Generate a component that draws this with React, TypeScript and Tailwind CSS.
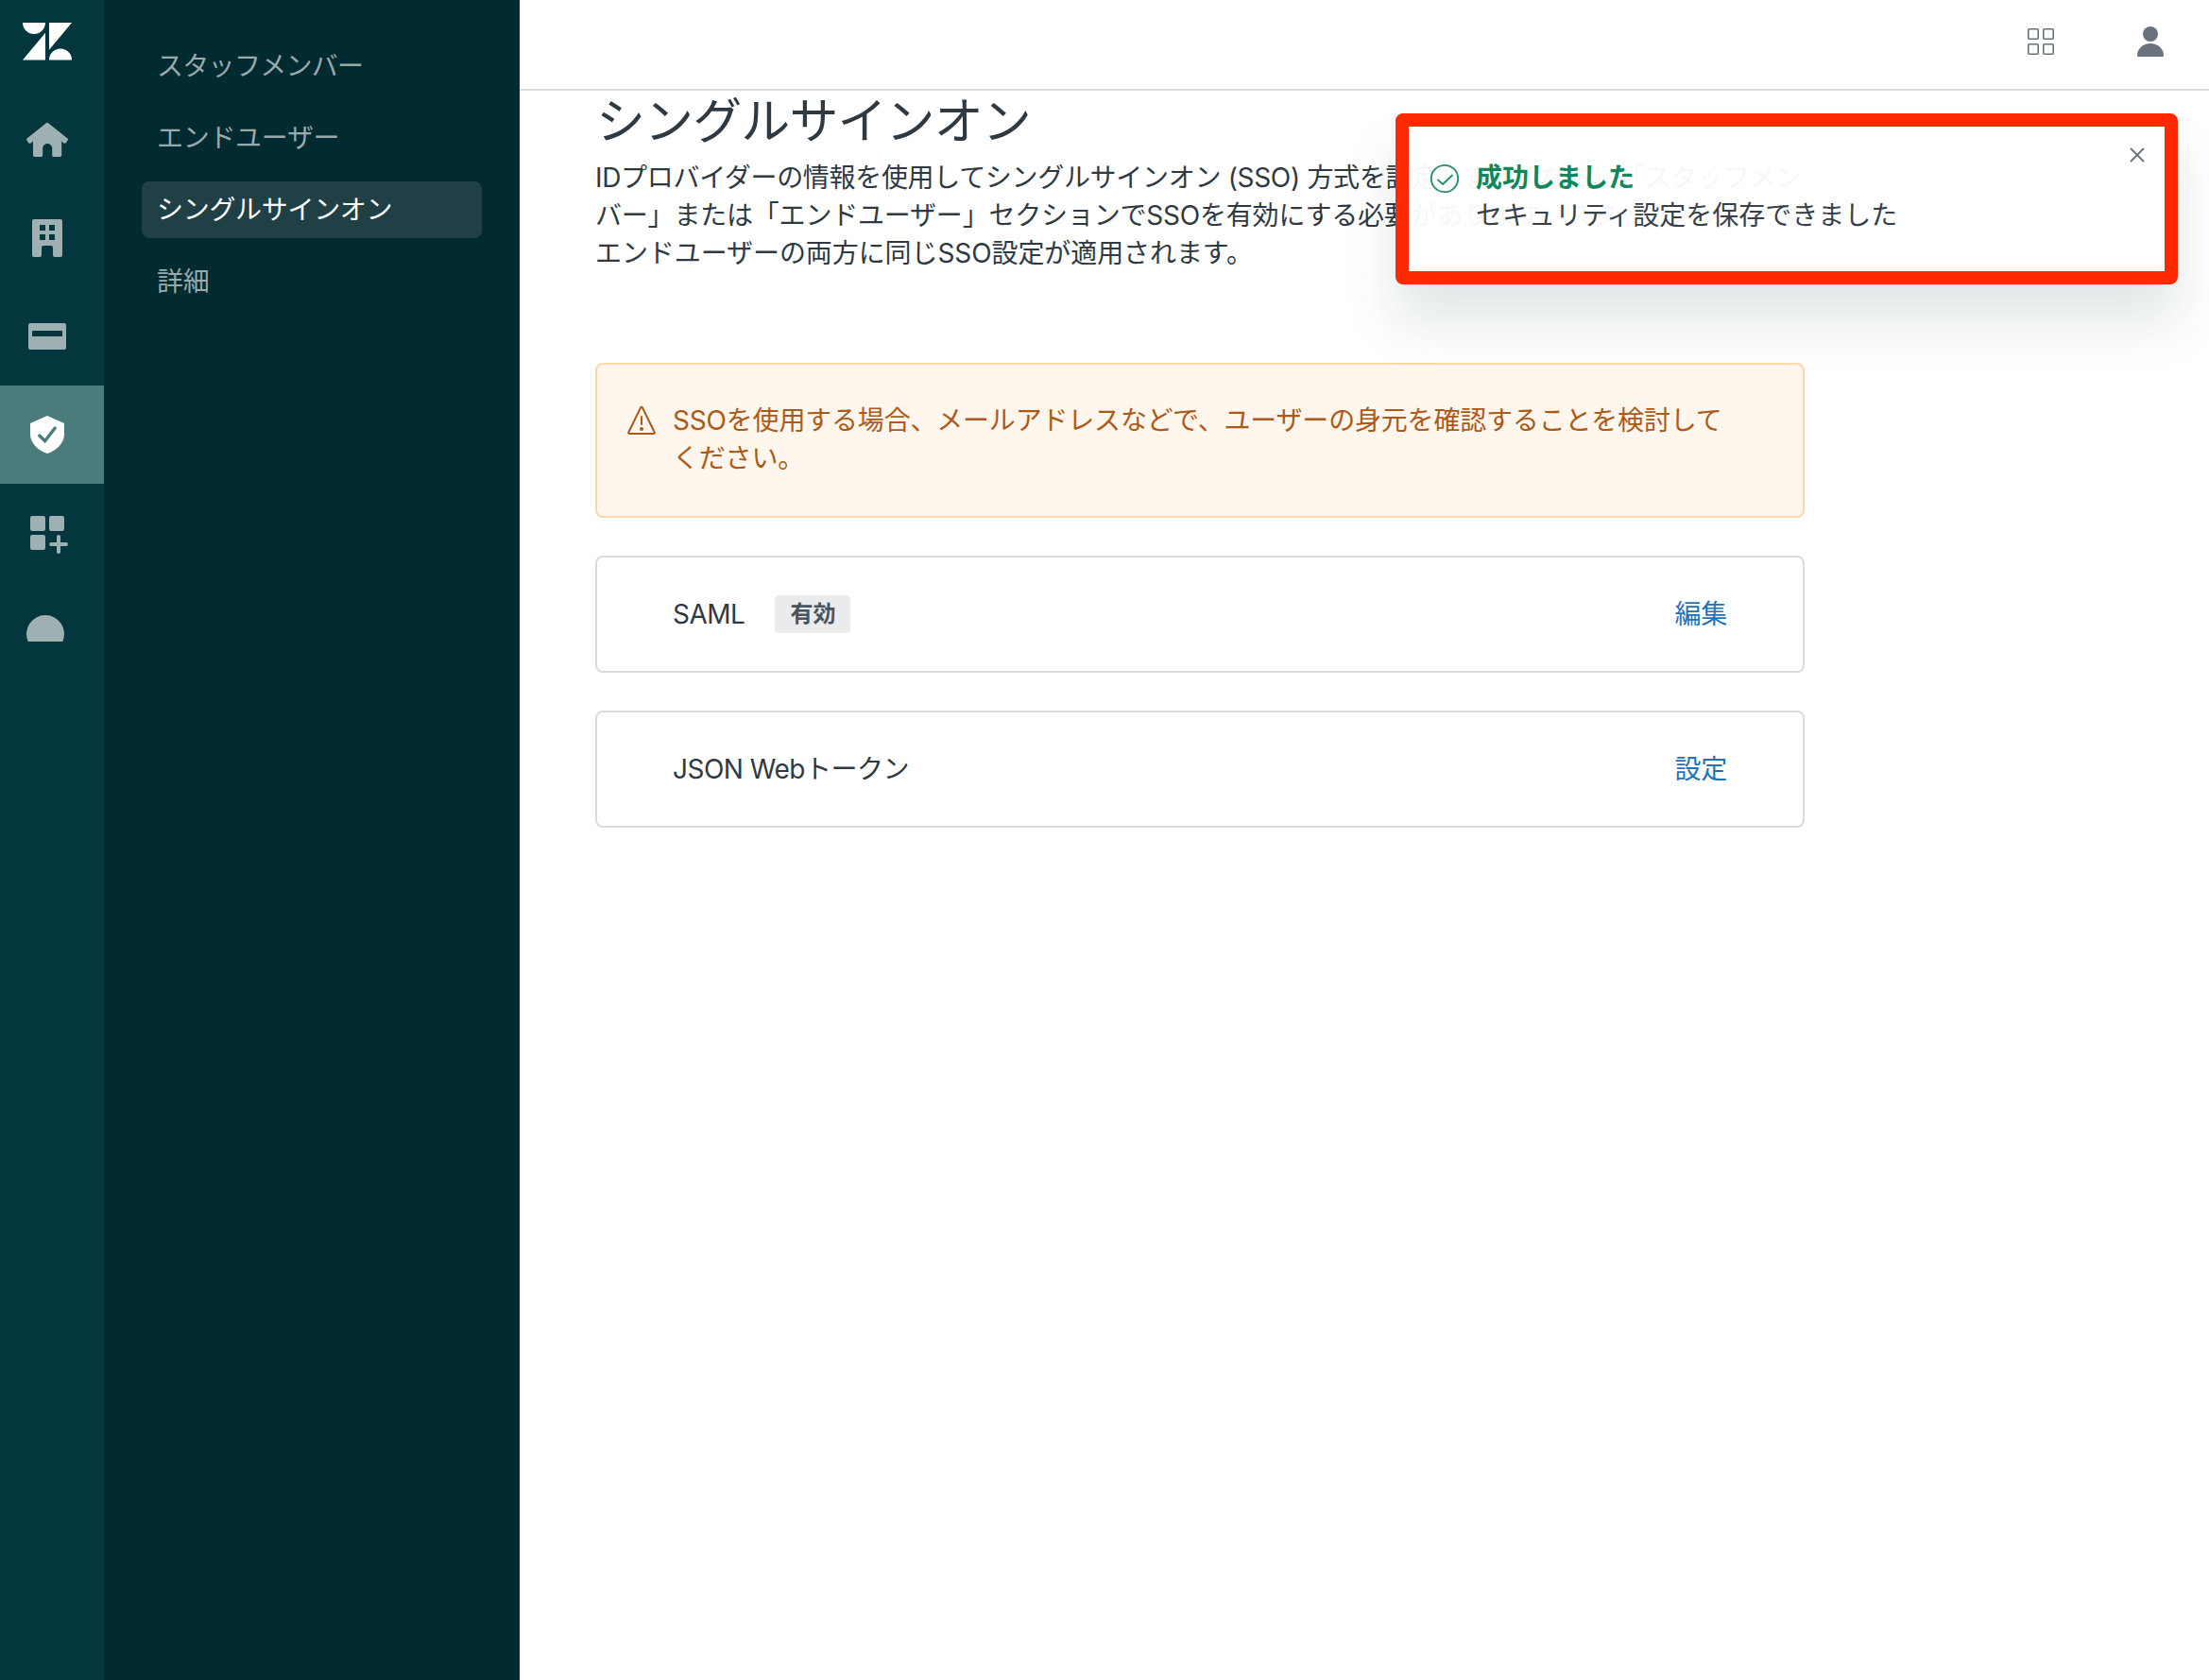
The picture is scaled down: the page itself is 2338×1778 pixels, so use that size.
import type { ReactNode } from "react";

function RailItem({ children, active = false }: { children: ReactNode; active?: boolean }) {
  return (
    <a
      className={
        active
          ? "flex h-[104px] items-center bg-[#4a7c7c] pl-6 text-white"
          : "flex h-[104px] items-center pl-6 text-[#9fb0b3]"
      }
    >
      <svg width="52" height="52" viewBox="0 0 26 26" fill="currentColor">
        {children}
      </svg>
    </a>
  );
}

function Rail() {
  return (
    <nav className="flex w-[110px] shrink-0 flex-col bg-[#03363d]">
      <div className="flex h-24 pt-6 pl-6">
        <svg width="52" height="40" viewBox="0 0 52 40" fill="#fff">
          <path d="M0 0h24a12 12 0 0 1-24 0zM24 10.700V39.500H0zM28 0h24L28 28.800zM28 39.500a12 12 0 0 1 24 0z" />
        </svg>
      </div>
      <RailItem>
        <path d="M12.300 4.200a1.100 1.100 0 0 1 1.400 0l10 8c.4.300.4.700.1 1.100l-.9 1.300c-.3.400-.8.400-1.100.1l-1.200-.9V21.100a.9.900 0 0 1-.9.900h-3.200a.9.900 0 0 1-.9-.9v-3.600a2.500 2.500 0 0 0-5 0v3.600a.9.900 0 0 1-.9.900H6.400a.9.900 0 0 1-.9-.9V13.800l-1.200.9c-.4.300-.9.300-1.200-.1l-.9-1.300c-.3-.4-.3-.8.100-1.100z" />
      </RailItem>
      <RailItem>
        <path
          fillRule="evenodd"
          d="M6 3h14a1 1 0 0 1 1 1v18a1 1 0 0 1-1 1h-3a1 1 0 0 1-1-1v-4a1 1 0 0 0-1-1h-4a1 1 0 0 0-1 1v4a1 1 0 0 1-1 1H6a1 1 0 0 1-1-1V4a1 1 0 0 1 1-1zM9 6v3h3V6zM14 6v3h3V6zM9 11v3h3v-3zM14 11v3h3v-3z"
        />
      </RailItem>
      <RailItem>
        <path
          fillRule="evenodd"
          d="M4 6h18a1 1 0 0 1 1 1v12a1 1 0 0 1-1 1H4a1 1 0 0 1-1-1V7a1 1 0 0 1 1-1zM5.400 10a.4.4 0 0 0-.4.4v2.200c0 .2.200.4.400.4h15.200a.4.4 0 0 0 .4-.4v-2.200a.4.4 0 0 0-.4-.4z"
        />
      </RailItem>
      <RailItem active>
        <path d="M13 3l9 4v6c0 4.500-4.500 8.700-9 10-4.500-1.300-9-5.500-9-10V7z" />
        <path
          d="M8.900 13.500l2.900 2.900 5.300-6.900"
          fill="none"
          stroke="#4a7c7c"
          strokeWidth="1.700"
          strokeLinecap="round"
        />
      </RailItem>
      <RailItem>
        <rect x="4" y="4" width="8" height="8" rx="1" />
        <rect x="14" y="4" width="8" height="8" rx="1" />
        <rect x="4" y="14" width="8" height="8" rx="1" />
        <path
          d="M19 15v8M15 19h8"
          fill="none"
          stroke="currentColor"
          strokeWidth="2"
          strokeLinecap="round"
        />
      </RailItem>
      <RailItem>
        <path d="M2.830 18.500a10 10 0 1 1 18.340 0z" />
      </RailItem>
    </nav>
  );
}

function SideLink({ label, active = false }: { label: string; active?: boolean }) {
  return (
    <a
      className={
        active
          ? "flex h-15 items-center rounded-lg bg-[#204045] pl-4 text-white"
          : "flex h-15 items-center rounded-lg pl-4 text-[#99aaac]"
      }
    >
      {label}
    </a>
  );
}

function MethodCard({ name, action, badge }: { name: string; action: string; badge?: string }) {
  return (
    <div className="flex h-[124px] items-center rounded-lg border-2 border-[#d8dcde] px-20">
      <span className="tracking-[-0.5px]">{name}</span>
      {badge && (
        <span className="ml-8 flex h-10 w-20 items-center justify-center rounded bg-[#e9ebed] text-2xl font-bold tracking-normal text-[#49545c]">
          {badge}
        </span>
      )}
      <a className="ml-auto text-[#1f73b7]">{action}</a>
    </div>
  );
}

function Toast() {
  return (
    <div className="absolute top-[120px] left-[1477px] flex h-[181px] w-[828px] rounded-lg border-[14px] border-[#ff2a00] bg-white/96 shadow-[0_40px_56px_0_rgba(23,73,77,0.13)]">
      <svg className="mt-[39px] ml-[22px] shrink-0" width="32" height="32" viewBox="0 0 32 32" fill="none" stroke="#228f67" strokeWidth="1.800">
        <circle cx="16" cy="16" r="14.200" />
        <path d="M9 17.500l5 4.500 10-9.500" strokeLinecap="round" strokeLinejoin="round" />
      </svg>
      <div className="mt-[34px] ml-[17px] leading-10 tracking-normal">
        <p className="font-bold text-[#0f875b]">成功しました</p>
        <p className="text-[#374149]">セキュリティ設定を保存できました</p>
      </div>
      <svg className="mt-[22px] mr-[21px] ml-auto" width="16" height="16" viewBox="0 0 16 16" stroke="#68737d" strokeWidth="1.800" strokeLinecap="round">
        <path d="M1.500 1.500l13 13M14.500 1.500l-13 13" />
      </svg>
    </div>
  );
}

export default function App() {
  return (
    <div className="relative flex h-[1778px] w-[2338px] overflow-hidden bg-white font-[Inter,'Noto_Sans_CJK_JP',sans-serif] text-[28px] leading-10 tracking-[-0.308px] whitespace-nowrap text-[#2f3941] [text-spacing-trim:space-all]">
      <Rail />
      <aside className="flex w-[440px] shrink-0 flex-col gap-4 bg-[#012b30] px-10 pt-10">
        <div className="tracking-[-0.7px]">
          <SideLink label="スタッフメンバー" />
        </div>
        <SideLink label="エンドユーザー" />
        <SideLink label="シングルサインオン" active />
        <SideLink label="詳細" />
      </aside>
      <div className="flex grow flex-col">
        <header className="flex h-24 items-start justify-end border-b-2 border-[#d8dcde] pr-12">
          <svg className="mt-[30px]" width="28" height="28" viewBox="0 0 28 28" fill="none" stroke="#68737d" strokeWidth="1.600">
            <rect x="0.800" y="0.800" width="10.400" height="10.400" rx="1" />
            <rect x="16.800" y="0.800" width="10.400" height="10.400" rx="1" />
            <rect x="0.800" y="16.800" width="10.400" height="10.400" rx="1" />
            <rect x="16.800" y="16.800" width="10.400" height="10.400" rx="1" />
          </svg>
          <svg className="mt-7 ml-[88px]" width="28" height="32" viewBox="0 0 28 32" fill="#68737d">
            <circle cx="14" cy="8" r="8" />
            <path d="M0 30.500a14 12.500 0 0 1 28 0q0 1.500-1.500 1.500h-25q-1.500 0-1.500-1.500z" />
          </svg>
        </header>
        <main className="flex w-[1360px] flex-col pl-20">
          <h1 className="pl-px text-[52px] leading-[66px] tracking-[-0.9px]">シングルサインオン</h1>
          <div className="mt-1.5">
            <p>IDプロバイダーの情報を使用してシングルサインオン (SSO) 方式を設定します。なお、「スタッフメン</p>
            <p className="tracking-[-0.2px]">バー」または「エンドユーザー」セクションでSSOを有効にする必要があります。スタッフメンバーと</p>
            <p className="tracking-[-0.08px]">エンドユーザーの両方に同じSSO設定が適用されます。</p>
          </div>
          <div className="mt-24 flex h-[164px] rounded-lg border-2 border-[#fed6a8] bg-[#fff6ed] pt-[39px] pl-8 text-[#ad5918]">
            <svg className="mt-1 shrink-0" width="30" height="32" viewBox="0 0 30 32" fill="none" stroke="#ad5918" strokeWidth="2">
              <path d="M14 2.600q1-1.600 2 0l12.600 25.600q.7 1.800-1 1.800H2.400q-1.700 0-1-1.800z" />
              <path d="M15 12v8" strokeLinecap="round" />
              <circle cx="15" cy="25" r="2" fill="#ad5918" stroke="none" />
            </svg>
            <div className="ml-[18px] tracking-[-0.19px]">
              <p>SSOを使用する場合、メールアドレスなどで、ユーザーの身元を確認することを検討して</p>
              <p>ください。</p>
            </div>
          </div>
          <div className="mt-10 flex flex-col gap-10">
            <MethodCard name="SAML" badge="有効" action="編集" />
            <MethodCard name="JSON Webトークン" action="設定" />
          </div>
        </main>
      </div>
      <Toast />
    </div>
  );
}
